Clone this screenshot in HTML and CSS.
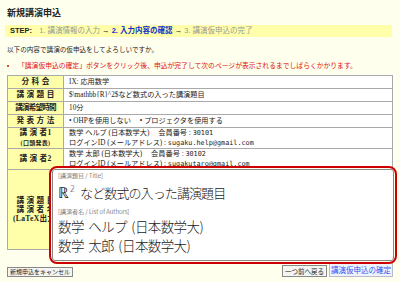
FILE: index.html
```html
<!DOCTYPE html>
<html lang="ja">
<head>
    <meta charset="UTF-8">
    <title>新規講演申込</title>
    <link rel="stylesheet" href="styles.css">
</head>
<body>
    <h1 class="page-title">新規講演申込</h1>

    <div class="step-bar">
        <b>STEP:</b>
        <span class="step-off">1. 講演情報の入力</span> →
        <span class="step-on">2. 入力内容の確認</span> →
        <span class="step-off">3. 講演仮申込の完了</span>
    </div>

    <p class="lead">以下の内容で講演の仮申込をしてよろしいですか。</p>

    <ul class="notice">
        <li>「講演仮申込の確定」ボタンをクリック後、申込が完了して次のページが表示されるまでしばらくかかります。</li>
    </ul>

    <div class="confirm-wrap">
        <table class="confirm">
            <tr>
                <th>分 科 会</th>
                <td>IX: 応用数学</td>
            </tr>
            <tr>
                <th>講 演 題 目</th>
                <td>$\mathbb{R}^2$など数式の入った講演題目</td>
            </tr>
            <tr>
                <th class="tight">講演希望時間</th>
                <td>10分</td>
            </tr>
            <tr>
                <th>発 表 方 法</th>
                <td>• OHPを使用しない　 • プロジェクタを使用する</td>
            </tr>
            <tr class="two-line">
                <th>講 演 者1<br><small>(口頭発表)</small></th>
                <td>数学 ヘルプ (日本数学大)　 会員番号 : <span class="mono">30101</span><br>ログインID (メールアドレス) : <span class="mono">sugaku.help@gmail.com</span></td>
            </tr>
            <tr class="two-line">
                <th>講 演 者2</th>
                <td>数学 太郎 (日本数学大)　 会員番号 : <span class="mono">30102</span><br>ログインID (メールアドレス) : <span class="mono">sugakutaro@gmail.com</span></td>
            </tr>
            <tr class="latex-row">
                <th>講 演 題 目<br>講 演 者 名<br>(LaTeX出力)</th>
                <td></td>
            </tr>
        </table>

        <!-- LaTeX出力プレビュー (表の上に重ねる) -->
        <div class="preview">
            <div class="preview-inner">
                <div class="preview-label">[講演題目 / Title]</div>
                <div class="preview-title"><span class="bb">ℝ<sup>2</sup></span><span class="tt">など数式の入った講演題目</span></div>
                <div class="preview-label">[講演者名 / List of Authors]</div>
                <div class="preview-author">数学 ヘルプ (日本数学大)</div>
                <div class="preview-author">数学 太郎 (日本数学大)</div>
            </div>
        </div>
    </div>

    <div class="actions">
        <button class="btn">新規申込をキャンセル</button>
        <div class="actions-right">
            <button class="btn btn-back">一つ前へ戻る</button>
            <button class="btn btn-main">講演仮申込の確定</button>
        </div>
    </div>
</body>
</html>
```

FILE: styles.css
```css
body {
    margin: 0;
    padding: 0 7px;
    background: #ffffee;
    color: #222;
    font-family: "Liberation Serif", "Noto Sans CJK JP", serif;
    font-size: 8px;
}
.page-title {
    font-family: "Liberation Sans", "Noto Sans CJK JP", sans-serif;
    font-size: 9px;
    font-weight: bold;
    line-height: 12px;
    margin: 0 0 6px 0;
    padding-top: 7px;
}
.step-bar {
    background: #ffffaa;
    margin: 0 1px 0 -2px;
    padding: 0 5px;
    height: 12px;
    line-height: 12px;
    font-family: "Liberation Sans", "Noto Sans CJK JP", sans-serif;
    font-size: 7.5px;
}
.step-bar b {
    margin-right: 5px;
}
.step-off { color: #999; }
.step-on { color: #1133cc; font-weight: bold; }
.lead {
    margin: 8px 0 0 0;
    height: 10px;
    line-height: 10px;
    font-size: 6.6px;
}
.notice {
    margin: 6px 0 4px 0;
    padding-left: 11px;
    height: 10px;
    line-height: 10px;
    color: #dd1111;
    font-family: "Liberation Sans", "Noto Sans CJK JP", sans-serif;
    font-size: 6.8px;
}
.notice li::marker {
    font-size: 8px;
}
.confirm-wrap {
    position: relative;
}
.confirm {
    width: 100%;
    border-collapse: collapse;
    border: 1px solid #777;
    background: #fff;
}
.confirm th,
.confirm td {
    border: 1px solid #aaa;
    padding: 0 5px;
    height: 12px;
    line-height: 10px;
    font-size: 7.2px;
}
.confirm th {
    width: 35px;
    background: #ffffaa;
    font-size: 7.6px;
    font-weight: bold;
    text-align: center;
    white-space: nowrap;
    letter-spacing: 0.3px;
}
.confirm th.tight {
    letter-spacing: -0.8px;
    padding: 0 1px;
}
.confirm th small {
    font-size: 6px;
}
.confirm td {
    text-align: left;
    white-space: nowrap;
    overflow: hidden;
}
.confirm .two-line th,
.confirm .two-line td {
    height: 20px;
    line-height: 10px;
}
.confirm .latex-row th {
    height: 79px;
    line-height: 9px;
}
.mono {
    font-family: "DejaVu Sans Mono", monospace;
    font-size: 6.8px;
}
.preview {
    position: absolute;
    left: 42px;
    right: -4px;
    bottom: -14px;
    height: 98px;
    border: 2px solid #cc0000;
    border-radius: 8px;
    box-sizing: border-box;
    padding: 1px;
    background: #ffffee;
}
.preview-inner {
    height: 100%;
    box-sizing: border-box;
    border: 1px solid #888;
    border-radius: 3px;
    background: #fff;
    padding: 1px 5px;
    font-family: "Noto Sans CJK JP", sans-serif;
    font-weight: 300;
}
.preview-label {
    font-size: 6px;
    line-height: 10px;
    color: #333;
}
.preview-title {
    font-size: 13px;
    line-height: 18px;
    margin-bottom: 5px;
}
.bb {
    font-family: "DejaVu Sans", sans-serif;
    font-size: 15px;
    margin-right: 5px;
}
.bb sup {
    font-size: 8px;
    margin-left: 1px;
}
.tt {
    letter-spacing: -0.9px;
}
.preview-author {
    font-size: 13.5px;
    line-height: 19px;
    letter-spacing: -0.6px;
    word-spacing: 2px;
}
.actions {
    display: flex;
    justify-content: space-between;
    align-items: flex-end;
    margin-top: 12px;
}
.actions-right {
    display: flex;
    align-items: flex-end;
    gap: 2px;
}
.btn {
    font-family: "Noto Sans CJK JP", sans-serif;
    font-size: 6px;
    line-height: 8px;
    padding: 0 2px;
    margin: 0;
    background: #f4f4f0;
    border: 1px solid #888;
    border-radius: 0;
    color: #222;
}
.btn-back {
    font-size: 6.5px;
    line-height: 10px;
}
.btn-main {
    font-size: 7.5px;
    line-height: 13px;
    color: #3355ee;
    background: #eef2ff;
    border-color: #bbc;
    padding: 0 1px;
}
```
